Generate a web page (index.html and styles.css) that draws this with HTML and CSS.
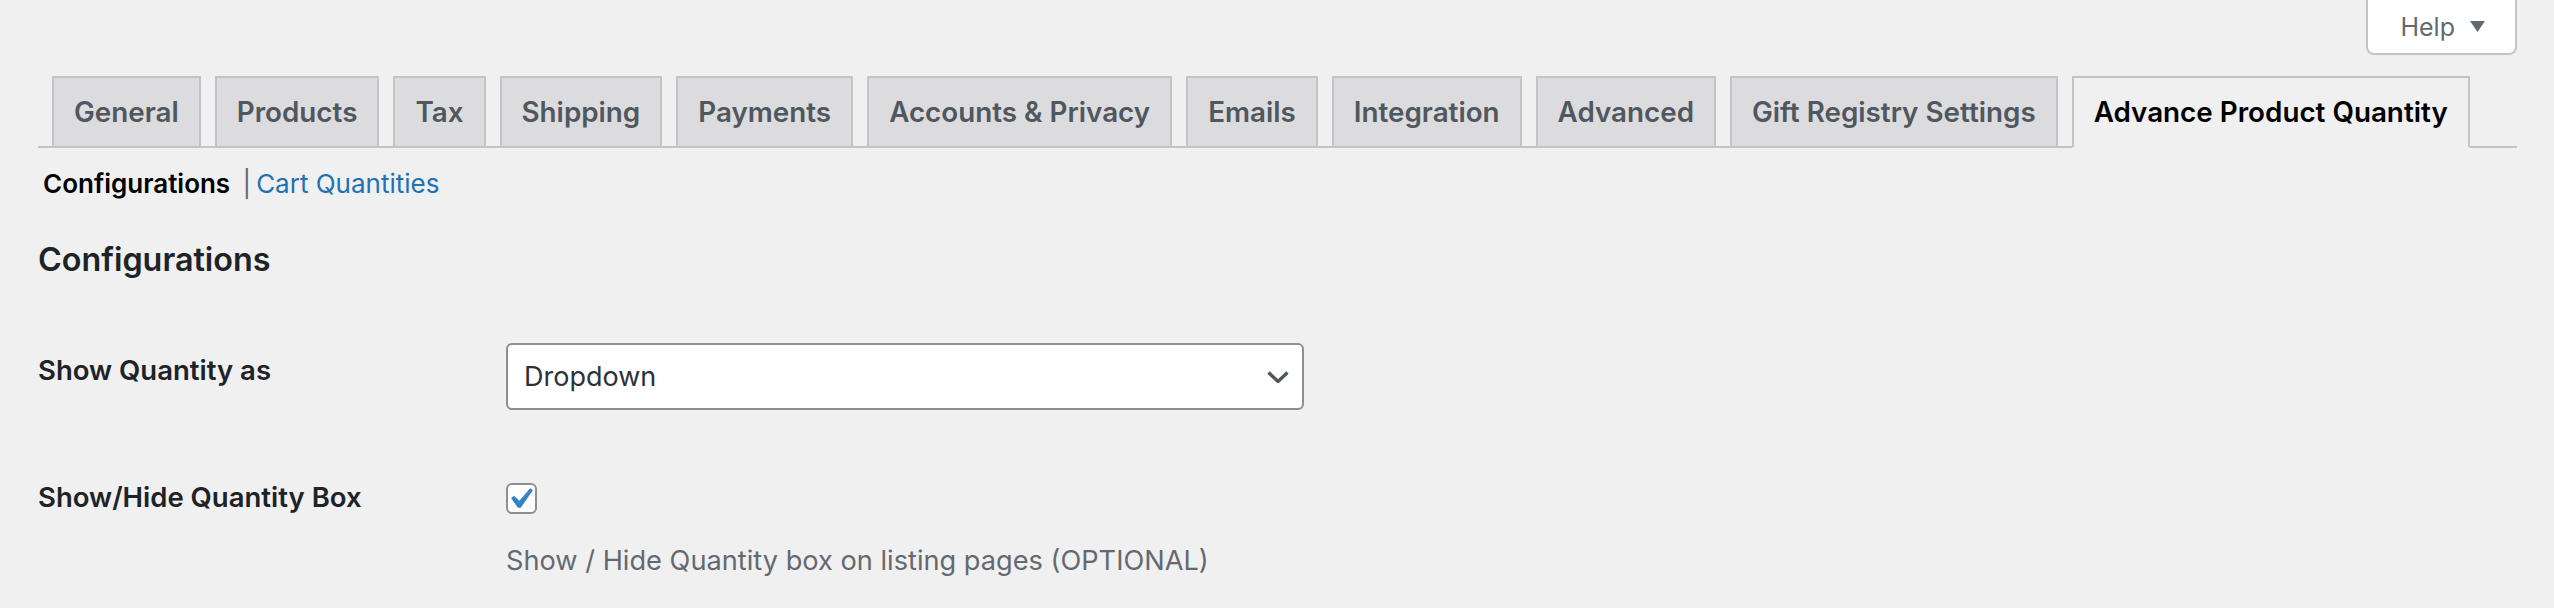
FILE: index.html
```html
<!DOCTYPE html>
<html lang="en">
<head>
    <meta charset="UTF-8">
    <meta name="viewport" content="width=device-width, initial-scale=1.0">
    <title>Advance Product Quantity &lsaquo; Settings</title>
    <link rel="stylesheet" href="styles.css">
</head>
<body>
    <div class="wrap">
        <div class="screen-meta-links">
            <button type="button" class="help-toggle">
                <span>Help</span>
                <svg class="help-arrow" width="15" height="11" viewBox="0 0 15 11"><path d="M0 0h15L7.5 11z" fill="#646970"/></svg>
            </button>
        </div>

        <nav class="nav-tab-wrapper">
            <a href="#" class="nav-tab">General</a>
            <a href="#" class="nav-tab">Products</a>
            <a href="#" class="nav-tab">Tax</a>
            <a href="#" class="nav-tab">Shipping</a>
            <a href="#" class="nav-tab">Payments</a>
            <a href="#" class="nav-tab">Accounts &amp; Privacy</a>
            <a href="#" class="nav-tab">Emails</a>
            <a href="#" class="nav-tab">Integration</a>
            <a href="#" class="nav-tab">Advanced</a>
            <a href="#" class="nav-tab">Gift Registry Settings</a>
            <a href="#" class="nav-tab nav-tab-active">Advance Product Quantity</a>
        </nav>

        <ul class="subsubsub">
            <li><a href="#" class="current">Configurations</a> |</li><li><a href="#">Cart Quantities</a></li>
        </ul>

        <h2>Configurations</h2>

        <table class="form-table">
            <tr>
                <th>Show Quantity as</th>
                <td>
                    <div class="select-wrap">
                        <select class="qty-select">
                            <option>Dropdown</option>
                            <option>Input box</option>
                        </select>
                        <!-- chevron sits over the select -->
                        <svg class="select-chevron" width="22" height="12" viewBox="0 0 22 12"><path d="M1.5 1.5l9.5 9 9.5-9" fill="none" stroke="#50575e" stroke-width="3.4"/></svg>
                    </div>
                </td>
            </tr>
            <tr>
                <th>Show/Hide Quantity Box</th>
                <td>
                    <label class="checkbox">
                        <svg width="42" height="42" viewBox="0 0 20 20"><path d="M14.83 4.89l1.34.94-5.81 8.38H9.02L5.78 9.67l1.34-1.25 2.57 2.4z" fill="#3582c4"/></svg>
                    </label>
                    <p class="description">Show / Hide Quantity box on listing pages (OPTIONAL)</p>
                </td>
            </tr>
        </table>
    </div>
</body>
</html>
```
FILE: styles.css
```css
body {
    margin: 0;
    background: #f0f0f1;
    color: #3c434a;
    font-family: "Inter", "Noto Sans", sans-serif;
}
.wrap {
    padding: 0 37px 0 38px;
}

/* help tab, top right */
.screen-meta-links {
    display: flex;
    justify-content: flex-end;
}
.help-toggle {
    display: flex;
    align-items: center;
    height: 55px;
    padding: 0 30px 0 32px;
    background: #fff;
    border: 2px solid #c3c4c7;
    border-top: none;
    border-radius: 0 0 8px 8px;
    color: #646970;
    font-family: inherit;
    font-size: 25px;
    cursor: pointer;
}
.help-arrow {
    margin-left: 15px;
}

/* settings tabs */
.nav-tab-wrapper {
    display: flex;
    align-items: flex-end;
    margin-top: 21px;
    border-bottom: 2px solid #c3c4c7;
}
.nav-tab {
    margin: 0 0 -2px 14px;
    padding: 10px 20px;
    border: 2px solid #c3c4c7;
    background: #dcdcde;
    color: #50575e;
    font-size: 27.8px;
    font-weight: 600;
    line-height: 48px;
    text-decoration: none;
    white-space: nowrap;
}
.nav-tab-active {
    background: #f0f0f1;
    border-bottom-color: #f0f0f1;
    color: #000;
}

/* sub links */
.subsubsub {
    list-style: none;
    margin: 20px 0 0;
    padding: 0;
    color: #646970;
    font-size: 26px;
    line-height: 32px;
}
.subsubsub li {
    display: inline;
}
.subsubsub a {
    padding: 0 5px;
    color: #2271b1;
    text-decoration: none;
}
.subsubsub a.current {
    color: #000;
    font-weight: 600;
}

h2 {
    margin: 40px 0 33px;
    color: #1d2327;
    font-size: 32.3px;
    font-weight: 600;
    line-height: 40px;
}

/* options table */
.form-table {
    border-collapse: collapse;
}
.form-table th {
    width: 400px;
    padding: 40px 48px 40px 0;
    vertical-align: top;
    text-align: left;
    color: #1d2327;
    font-size: 27.5px;
    font-weight: 600;
    line-height: 1.3;
}
.form-table td {
    padding: 30px 20px;
    vertical-align: top;
}
.select-wrap {
    position: relative;
    width: 798px;
}
.qty-select {
    display: block;
    width: 100%;
    height: 67px;
    padding: 0 48px 0 16px;
    border: 2px solid #8c8f94;
    border-radius: 6px;
    background: #fff;
    color: #2c3338;
    font-family: inherit;
    font-size: 27px;
    -webkit-appearance: none;
    appearance: none;
}
.select-chevron {
    position: absolute;
    top: 28px;
    right: 15px;
    pointer-events: none;
}
.checkbox {
    display: block;
    position: relative;
    width: 27px;
    height: 27px;
    margin-top: 13px;
    border: 2px solid #8c8f94;
    border-radius: 6px;
    background: #fff;
}
.checkbox svg {
    position: absolute;
    top: -7px;
    left: -9px;
}
.description {
    margin: 27px 0 0;
    color: #646970;
    font-size: 27.2px;
    line-height: 1.5;
}
```
